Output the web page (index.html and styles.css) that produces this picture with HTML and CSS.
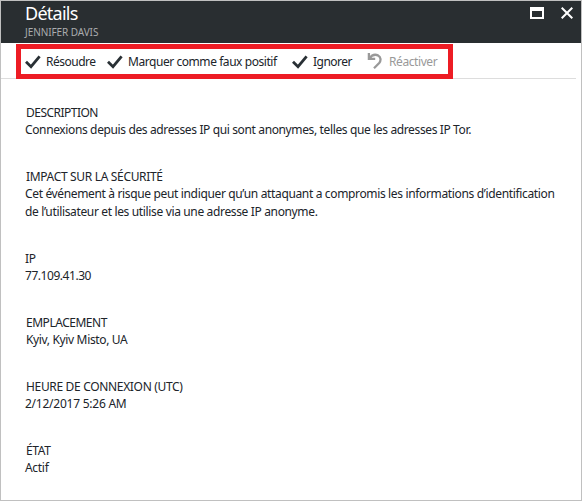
FILE: index.html
```html
<!DOCTYPE html>
<html lang="fr">
<head>
<meta charset="utf-8">
<title>Détails</title>
<link rel="stylesheet" href="styles.css">
</head>
<body>
<main class="blade">
  <header class="header">
    <div class="heading">
      <h1 class="title">Détails</h1>
      <p class="subtitle">JENNIFER DAVIS</p>
    </div>
    <svg class="window-icon" width="14" height="12" viewBox="0 0 14 12"><path fill="#fff" fill-rule="evenodd" d="M0 0h14v12H0zM2 4v6h10V4z"/></svg>
    <svg class="close-icon" width="12" height="12" viewBox="0 0 12 12"><path fill="none" stroke="#fff" stroke-width="2" d="M.7.7l10.6 10.6M11.3.7L.7 11.3"/></svg>
  </header>
  <div class="toolbar">
    <nav class="commands">
      <span class="command resolve"><svg class="icon" width="16" height="14" viewBox="0 0 16 14"><path d="M1 6.8L6 11.7L14.6 1.4"/></svg><span class="text">Résoudre</span></span>
      <span class="command false-positive"><svg class="icon" width="16" height="14" viewBox="0 0 16 14"><path d="M1 6.8L6 11.7L14.6 1.4"/></svg><span class="text">Marquer comme faux positif</span></span>
      <span class="command ignore"><svg class="icon" width="16" height="14" viewBox="0 0 16 14"><path d="M1 6.8L6 11.7L14.6 1.4"/></svg><span class="text">Ignorer</span></span>
      <span class="command disabled"><svg class="icon undo" width="16" height="16" viewBox="0 0 16 16"><path d="M1.9 0V5.8H8.2M2.2 5.5C4.5 2.4 8 1 11 2.4C14 4 14.2 7.6 12.2 10L7 15.2"/></svg><span class="text">Réactiver</span></span>
    </nav>
  </div>
  <dl class="details">
    <div class="field description"><dt>DESCRIPTION</dt><dd>Connexions depuis des adresses IP qui sont anonymes, telles que les adresses IP Tor.</dd></div>
    <div class="field impact"><dt>IMPACT SUR LA SÉCURITÉ</dt><dd>Cet événement à risque peut indiquer qu’un attaquant a compromis les informations d’identification<br>de l’utilisateur et les utilise via une adresse IP anonyme.</dd></div>
    <div class="field ip"><dt>IP</dt><dd>77.109.41.30</dd></div>
    <div class="field place"><dt>EMPLACEMENT</dt><dd>Kyiv, Kyiv Misto, UA</dd></div>
    <div class="field time"><dt>HEURE DE CONNEXION (UTC)</dt><dd>2/12/2017 5:26 AM</dd></div>
    <div class="field state"><dt>ÉTAT</dt><dd>Actif</dd></div>
  </dl>
</main>
</body>
</html>
```
FILE: styles.css
```css
* { box-sizing: border-box; }
body, h1, p, dl, dd { margin: 0; }
body { font: 12px/18px "Noto Sans", "Open Sans", sans-serif; color: #20242a; background: #fff; }
svg { display: block; flex: none; }
.blade { height: 501px; border: 1px solid #c0c0c0; overflow: hidden; white-space: nowrap; }
.header { display: flex; align-items: flex-start; height: 42px; padding: 0 8px 0 24px; background: #292e31; color: #fff; }
.heading { flex: 1; }
.title { font-size: 18px; line-height: 24px; font-weight: 400; letter-spacing: -.75px; }
.subtitle { padding-top: 1px; font-size: 10px; line-height: 13px; color: #a9acae; letter-spacing: -.08px; }
.window-icon { margin-top: 6px; }
.close-icon { margin: 6px 0 0 17px; }
.toolbar { height: 36px; margin-right: 5px; padding: 1px 0 0 15px; border-bottom: 1px solid #ddd; }
.commands { display: flex; position: relative; width: 437px; height: 35px; border: 5px solid #ed1c24; padding-left: 4px; }
.command { display: flex; align-items: center; height: 25px; letter-spacing: -.5px; }
.icon { margin-right: 5px; fill: none; stroke: #293035; stroke-width: 2.8; }
.resolve { width: 82px; }
.false-positive { width: 185px; letter-spacing: -.44px; }
.ignore { width: 75px; }
.disabled { color: #999; letter-spacing: -.42px; }
.undo { stroke: #999; stroke-width: 2.3; margin: 0 6px 1px 0; }
.details { padding: 25px 0 0 24px; }
.field { margin-bottom: 29px; }
dt { line-height: 17px; padding-left: 1px; letter-spacing: -.33px; }
dd { letter-spacing: -.35px; }
.description dt { letter-spacing: -.52px; }
.description dd { letter-spacing: -.37px; }
.ip dt { padding-left: 0; }
.ip dd { letter-spacing: -.45px; }
.place dt { letter-spacing: -.48px; }
.place dd { padding-left: 1px; }
.time dd { letter-spacing: -.24px; }
.state dd { letter-spacing: -.3px; }
```
